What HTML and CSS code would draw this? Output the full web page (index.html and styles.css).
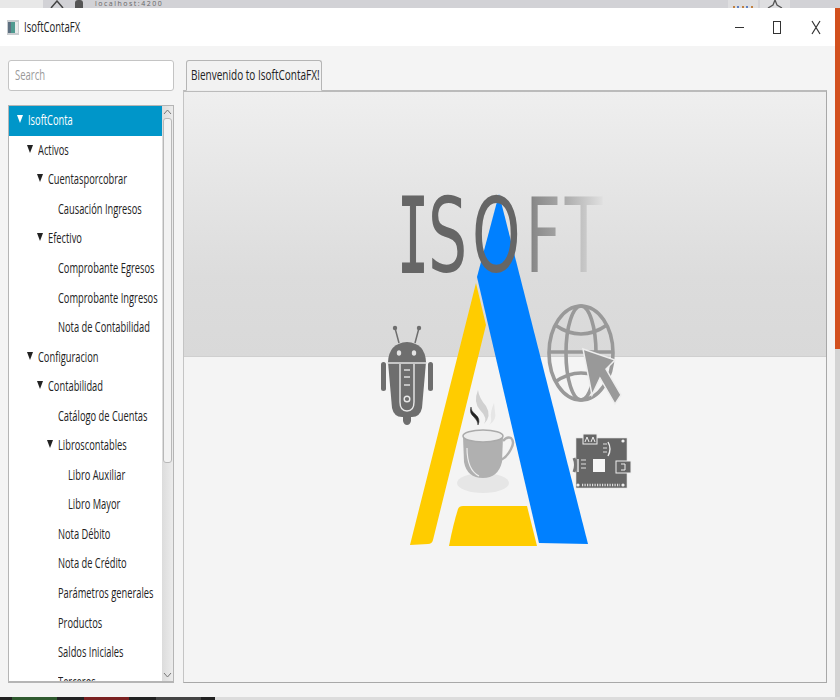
FILE: index.html
```html
<!DOCTYPE html>
<html lang="es">

<head>
    <meta charset="UTF-8">
    <meta name="viewport" content="width=device-width, initial-scale=1.0">
    <title>IsoftContaFX</title>
    <link rel="stylesheet" href="styles.css">
</head>

<body>
    <div class="browser-strip">
        <svg class="strip-home" width="14" height="8" viewBox="0 0 14 8"><path d="M1 8 L7 1 L13 8" fill="none" stroke="#444" stroke-width="1.5"/></svg>
        <span class="strip-doc"></span>
        <span class="strip-url">localhost:4200</span>
        <span class="strip-right">
            <span class="strip-box"><span class="strip-dots"></span></span>
            <span class="strip-box">
                <svg width="16" height="8" viewBox="0 0 16 8"><path d="M8 0 L10 5 L15 8 M8 0 L6 5 L1 8" fill="none" stroke="#555" stroke-width="1.3"/></svg>
            </span>
        </span>
    </div>

    <div class="main">
        <div class="window">
            <header class="titlebar">
                <svg class="app-icon" width="12" height="15" viewBox="0 0 12 15">
                    <rect width="12" height="15" fill="#c9cdd0"/>
                    <rect x="1" y="2" width="3" height="11" fill="#5d6f80"/>
                    <rect x="4" y="2" width="4" height="11" fill="#4f9a90"/>
                    <rect x="8" y="2" width="3" height="11" fill="#e8eaea"/>
                </svg>
                <span class="lbl app-title">IsoftContaFX</span>
                <div class="controls">
                    <span class="ctl-min"></span>
                    <span class="ctl-max"></span>
                    <svg class="ctl-close" width="10" height="15" viewBox="0 0 10 15"><path d="M1 1 L9 14 M9 1 L1 14" stroke="#333" stroke-width="1.2" fill="none"/></svg>
                </div>
            </header>

            <div class="content">
                <aside class="side">
                    <div class="search"><span class="lbl search-hint">Search</span></div>
                    <div class="tree">
                        <ul class="tree-list">
                            <li class="row selected lvl0"><i class="arrow"></i><span class="lbl">IsoftConta</span></li>
                            <li class="row lvl1"><i class="arrow"></i><span class="lbl">Activos</span></li>
                            <li class="row lvl2"><i class="arrow"></i><span class="lbl">Cuentasporcobrar</span></li>
                            <li class="row lvl3"><span class="lbl">Causación Ingresos</span></li>
                            <li class="row lvl2"><i class="arrow"></i><span class="lbl">Efectivo</span></li>
                            <li class="row lvl3"><span class="lbl">Comprobante Egresos</span></li>
                            <li class="row lvl3"><span class="lbl">Comprobante Ingresos</span></li>
                            <li class="row lvl3"><span class="lbl">Nota de Contabilidad</span></li>
                            <li class="row lvl1"><i class="arrow"></i><span class="lbl">Configuracion</span></li>
                            <li class="row lvl2"><i class="arrow"></i><span class="lbl">Contabilidad</span></li>
                            <li class="row lvl3"><span class="lbl">Catálogo de Cuentas</span></li>
                            <li class="row lvl3"><i class="arrow"></i><span class="lbl">Libroscontables</span></li>
                            <li class="row lvl4"><span class="lbl">Libro Auxiliar</span></li>
                            <li class="row lvl4"><span class="lbl">Libro Mayor</span></li>
                            <li class="row lvl3"><span class="lbl">Nota Débito</span></li>
                            <li class="row lvl3"><span class="lbl">Nota de Crédito</span></li>
                            <li class="row lvl3"><span class="lbl">Parámetros generales</span></li>
                            <li class="row lvl3"><span class="lbl">Productos</span></li>
                            <li class="row lvl3"><span class="lbl">Saldos Iniciales</span></li>
                            <li class="row lvl3"><span class="lbl">Terceros</span></li>
                        </ul>
                        <div class="scrollbar">
                            <svg width="9" height="6" viewBox="0 0 9 6"><path d="M1 5 L4.5 1 L8 5" fill="none" stroke="#777"/></svg>
                            <div class="track"><div class="thumb"></div></div>
                            <svg width="9" height="6" viewBox="0 0 9 6"><path d="M1 1 L4.5 5 L8 1" fill="none" stroke="#777"/></svg>
                        </div>
                    </div>
                </aside>

                <section class="tabs">
                    <div class="tab-head"><div class="tab"><span class="lbl tab-text">Bienvenido to IsoftContaFX!</span></div></div>
                    <div class="tab-body">
                        <div class="banner"></div>
                        <svg class="logo" width="270" height="380" viewBox="370 180 270 380">
                            <defs>
                                <linearGradient id="fade" x1="0" x2="1" y1="0" y2="0">
                                    <stop offset="0" stop-color="#666"/>
                                    <stop offset="0.53" stop-color="#666"/>
                                    <stop offset="0.59" stop-color="#8a8a8a"/>
                                    <stop offset="0.75" stop-color="#a8a8a8"/>
                                    <stop offset="1" stop-color="#e6e6e6"/>
                                </linearGradient>
                            </defs>

                            <!-- A -->
                            <path d="M476 283 L486 325 L433 540 Q432 544 428 544 L410 545 Z" fill="#ffcc00"/>
                            <path d="M458 509 Q459 506 463 506 L527 506 L537 546 L449 546 Q453 525 458 509 Z" fill="#ffcc00"/>
                            <path d="M499 194 L588 544 L539 543 L477 277 Z" fill="#0080ff"/>
                            <text class="isoft-i" transform="translate(397.5 272) scale(0.5 1)" fill="#666" stroke="#666" stroke-width="2">I</text>
                            <text class="isoft" transform="translate(428 272) scale(0.6 1)" fill="url(#fade)">SOFT</text>

                            <!-- android -->
                            <path d="M395 328 L399 343 M419 328 L415 343" stroke="#6e6e6e" stroke-width="1.5" fill="none"/>
                            <circle cx="395" cy="328" r="2.2" fill="#6e6e6e"/>
                            <circle cx="419" cy="328" r="2.2" fill="#6e6e6e"/>
                            <path d="M388 362 Q389 343 407 342 Q425 343 426 362 L422 408 Q420 417 412 417 L402 417 Q394 417 392 408 Z" fill="#6e6e6e"/>
                            <path d="M387 363 H427" stroke="#e4e4e4" stroke-width="1.4"/>
                            <ellipse cx="399" cy="353" rx="2.2" ry="2.8" fill="#e4e4e4"/>
                            <ellipse cx="414" cy="353" rx="2.2" ry="2.8" fill="#e4e4e4"/>
                            <path d="M400 364 V402 Q400 411 407 411 Q414 411 414 402 V364" fill="none" stroke="#e8e8e8" stroke-width="1.4"/>
                            <path d="M404 370 H410 M404 377 H410 M404 385 H410" stroke="#ddd" stroke-width="1.4"/>
                            <circle cx="407" cy="399" r="2.8" fill="none" stroke="#e8e8e8" stroke-width="1.4"/>
                            <rect x="381" y="362" width="5" height="29" rx="2.5" fill="#6e6e6e"/>
                            <rect x="428" y="362" width="5" height="29" rx="2.5" fill="#6e6e6e"/>
                            <path d="M403 417 H411 V421 Q410 425 407 425 Q404 425 403 421 Z" fill="#6e6e6e"/>

                            <!-- globe and pointer -->
                            <g fill="none" stroke="#999" stroke-width="3.6">
                                <ellipse cx="581" cy="353" rx="32" ry="47"/>
                                <ellipse cx="581" cy="353" rx="15" ry="47"/>
                                <path d="M555 325 Q581 343 607 325 M555 382 Q581 364 607 382 M549 352 H612"/>
                            </g>
                            <path d="M583 349 L615 360 L606 369 L621 395 L615 404 L600 378 L592 395 Z" fill="#999" stroke="#eee" stroke-width="1.5"/>

                            <!-- cup -->
                            <ellipse cx="483" cy="483" rx="26" ry="10" fill="#e6e6e6"/>
                            <path d="M463 437 H503 L502 462 Q498 478 483 478 Q467 478 464 462 Z" fill="#b0b0b0"/>
                            <ellipse cx="483" cy="436" rx="20" ry="6" fill="#ececec" stroke="#aaa" stroke-width="1.5"/>
                            <path d="M503 441 Q507 436 511 438 Q515 442 511 449 Q507 457 501 460" fill="none" stroke="#b0b0b0" stroke-width="2.4"/>
                            <path d="M467 448 Q467 470 479 476" fill="none" stroke="#eee" stroke-width="1.2"/>
                            <path d="M478 390 Q473 402 480 410 Q488 418 484 424 Q492 416 486 406 Q479 398 478 390 Z" fill="#d0d0d0"/>
                            <path d="M494 403 Q490 412 491 418 Q492 422 489 425 Q497 420 495 412 Z" fill="#e6e6e6"/>
                            <path d="M471 407 Q469 413 474 417 Q478 421 478 425 Q481 419 475 414 Q471 411 471 407 Z" fill="#222" stroke="#222" stroke-width="0.5"/>

                            <!-- board -->
                            <rect x="576" y="438" width="51" height="50" fill="#666" stroke="#ddd" stroke-width="0.6"/>
                            <rect x="583" y="434" width="14" height="10" fill="#666" stroke="#eee"/>
                            <path d="M585 442 L587 437 L589 442 M591 442 L593 437 L595 442" fill="none" stroke="#eee"/>
                            <path d="M574 458 Q577 465 574 472" fill="none" stroke="#777" stroke-width="3"/>
                            <path d="M578 459 V472 M608 442 Q612 449 608 456" fill="none" stroke="#eee" stroke-width="1.4"/>
                            <path d="M581 460 H586 M581 464 H586 M581 468 H586 M603 444 H607 M603 448 H607 M603 452 H607" stroke="#ddd" stroke-width="1.2"/>
                            <rect x="593" y="459" width="12" height="13" fill="#f6f6f6"/>
                            <rect x="616" y="461" width="15" height="12" fill="#666" stroke="#eee"/>
                            <path d="M621 464 H625 V470 H621" fill="none" stroke="#eee"/>
                            <circle cx="578" cy="485" r="1.6" fill="#eee"/>
                            <circle cx="623" cy="485" r="1.6" fill="#eee"/>
                            <circle cx="623" cy="441" r="1.6" fill="#eee"/>
                            <path d="M582 485 H620" stroke="#ddd" stroke-width="2.4" stroke-dasharray="1.2 1.3"/>
                        </svg>
                    </div>
                </section>
            </div>
        </div>
        <div class="edge"></div>
    </div>

    <div class="taskbar">
        <span class="task task-green"></span>
        <span class="task task-red"></span>
        <span class="task task-gray"></span>
    </div>
</body>

</html>
```

FILE: styles.css
```css
* {
    box-sizing: border-box;
}

body {
    margin: 0;
    width: 840px;
    height: 700px;
    overflow: hidden;
    display: flex;
    flex-direction: column;
    background-color: #f4f4f4;
    font-family: "Open Sans", "Liberation Sans", sans-serif;
    color: #222;
}

/* the text in the shot is squeezed sideways */
.lbl {
    display: inline-block;
    margin-top: -2px;
    font-size: 14px;
    white-space: nowrap;
    transform: scaleX(0.68);
    transform-origin: left center;
}

.browser-strip {
    height: 8px;
    flex: none;
    display: flex;
    align-items: flex-start;
    background: linear-gradient(90deg, #e8e8e8 43px, #d2d2d6 43px);
    padding-left: 50px;
}

.strip-doc {
    width: 8px;
    height: 8px;
    margin-left: 11px;
    background-color: #555;
    border-radius: 3px 3px 0 0;
}

.strip-url {
    margin-left: 12px;
    font-size: 7px;
    line-height: 8px;
    letter-spacing: 1.5px;
    color: #666;
}

.strip-right {
    margin-left: auto;
    margin-right: 50px;
    display: flex;
    gap: 2px;
}

.strip-box {
    width: 30px;
    height: 8px;
    display: flex;
    justify-content: center;
    background-color: #dedee0;
}

.strip-dots {
    width: 20px;
    height: 2px;
    margin-top: 6px;
    background: repeating-linear-gradient(90deg, #c08040 0 2px, transparent 2px 4px, #6080c0 4px 6px, transparent 6px 9px);
}

.main {
    flex: 1;
    display: flex;
    min-height: 0;
}

.window {
    width: 835px;
    display: flex;
    flex-direction: column;
    background-color: #f4f4f4;
}

.titlebar {
    height: 38px;
    flex: none;
    display: flex;
    align-items: center;
    padding-left: 7px;
    background-color: #fff;
}

.app-title {
    margin-left: 5px;
}

.controls {
    margin-left: auto;
    display: flex;
    align-items: center;
}

.ctl-min {
    width: 9px;
    height: 1px;
    margin-right: 29px;
    background-color: #333;
}

.ctl-max {
    width: 8px;
    height: 13px;
    margin-right: 30px;
    border: 1px solid #333;
}

.ctl-close {
    margin-right: 14px;
}

.content {
    flex: 1;
    display: flex;
    min-height: 0;
    padding: 14px 8px 14px 8px;
    gap: 9px;
}

.side {
    width: 166px;
    flex: none;
    display: flex;
    flex-direction: column;
    gap: 14px;
}

.search {
    height: 31px;
    flex: none;
    display: flex;
    align-items: center;
    padding: 0 6px;
    border: 1px solid #c4c4c4;
    border-radius: 3px;
    background-color: #fff;
}

.search-hint {
    color: #999;
}

.tree {
    flex: 1;
    min-height: 0;
    display: flex;
    overflow: hidden;
    border: 1px solid #b5b5b5;
    border-bottom-width: 2px;
    background-color: #fff;
}

.tree-list {
    flex: 1;
    min-width: 0;
    margin: 0;
    padding: 0;
    list-style: none;
    overflow: hidden;
}

.row {
    height: 29.55px;
    display: flex;
    align-items: center;
    position: relative;
}

.row .lbl {
    transform: scaleX(0.665);
}

.selected {
    background-color: #0096c9;
    color: #fff;
}

.lvl0 {
    padding-left: 19px;
}

.lvl1 {
    padding-left: 29px;
}

.lvl2 {
    padding-left: 39px;
}

.lvl3 {
    padding-left: 49px;
}

.lvl4 {
    padding-left: 59px;
}

.arrow {
    position: absolute;
    margin-left: -11px;
    margin-top: -3px;
    width: 0;
    height: 0;
    border-left: 3.5px solid transparent;
    border-right: 3.5px solid transparent;
    border-top: 8px solid #222;
}

.selected .arrow {
    border-top-color: #fff;
}

.scrollbar {
    width: 11px;
    flex: none;
    display: flex;
    flex-direction: column;
    align-items: center;
    gap: 3px;
    padding: 3px 0;
    background: linear-gradient(90deg, #dcdcdc, #ececec);
}

.track {
    flex: 1;
    width: 100%;
}

.thumb {
    height: 345px;
    margin: 0 1px;
    background-color: #f2f2f2;
    border: 1px solid #b8b8b8;
    border-radius: 3px;
}

.tabs {
    flex: 1;
    min-width: 0;
    display: flex;
    flex-direction: column;
}

.tab-head {
    height: 31px;
    flex: none;
    display: flex;
    padding-left: 3px;
    margin-bottom: -1px;
    position: relative;
    z-index: 1;
}

.tab {
    width: 136px;
    height: 31px;
    padding-left: 4px;
    display: flex;
    align-items: center;
    overflow: hidden;
    border: 1px solid #b5b5b5;
    border-bottom-color: #eee;
    border-radius: 3px 3px 0 0;
    background-color: #f2f2f2;
}

.tab-text {
    transform: scaleX(0.715);
}

.tab-body {
    flex: 1;
    position: relative;
    overflow: hidden;
    border: 1px solid #a8a8a8;
    border-top: 2px solid #bbb;
    border-left-color: #c4c4c4;
    background-color: #f4f4f4;
}

.banner {
    height: 265px;
    background: linear-gradient(#efefef, #dcdcdc 70%, #d9d9d9);
    border-bottom: 1px solid #cfcfcf;
}

.logo {
    position: absolute;
    left: 186px;
    top: 88px;
}

.isoft {
    font-family: "DejaVu Sans", sans-serif;
    font-size: 103px;
    letter-spacing: 8px;
}

.isoft-i {
    font-family: "DejaVu Sans Mono", monospace;
    font-size: 103px;
}

.edge {
    flex: 1;
    background: linear-gradient(#d2501e 341px, #d4d4d4 341px);
}

.taskbar {
    height: 3px;
    flex: none;
    display: flex;
    gap: 27px;
    padding-left: 12px;
    background: linear-gradient(90deg, #222 215px, #dcdcdc 215px);
}

.task {
    width: 45px;
}

.task-green {
    background-color: #2f5a2f;
}

.task-red {
    background-color: #7a2020;
}

.task-gray {
    background-color: #444;
}
```
